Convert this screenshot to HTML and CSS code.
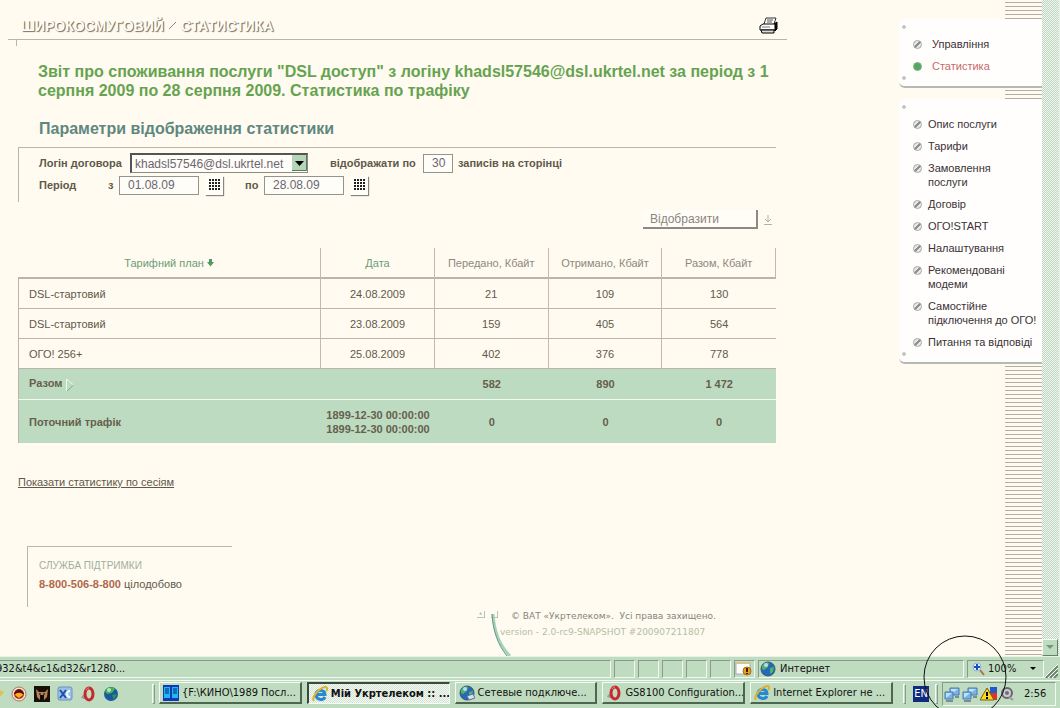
FILE: index.html
```html
<!DOCTYPE html>
<html lang="uk">
<head>
    <meta charset="UTF-8">
    <meta name="viewport" content="width=device-width, initial-scale=1.0">
    <title>Мій Укртелеком :: Статистика</title>
    <link rel="stylesheet" href="styles.css">
</head>
<body>
    <div class="browser">
        <main class="page">
            <header class="header">
                <div class="crumbs">
                    <span>ШИРОКОСМУГОВИЙ</span>
                    <svg width="9" height="9" viewBox="0 0 9 9"><path d="M1 8L8 1" stroke="#8d8779"/></svg>
                    <span>СТАТИСТИКА</span>
                </div>
                <button class="print" type="button" aria-label="Друк">
                    <svg width="20" height="18" viewBox="0 0 20 18">
                        <path d="M5 7L7 1H17L15 7" fill="#fff" stroke="#333"/>
                        <path d="M8 3H14M8 5H13" stroke="#555"/>
                        <path d="M15 7L18 5V12L16 14Z" fill="#111" stroke="#000"/>
                        <path d="M1 9L4 7H16V13H1Z" fill="#fff" stroke="#000"/>
                        <path d="M2 13H15V16H3Z" fill="#ddd" stroke="#000"/>
                        <path d="M3 10H11" stroke="#777"/>
                    </svg>
                </button>
            </header>

            <div class="content">
                <h1>Звіт про споживання послуги "DSL доступ" з логіну khadsl57546@dsl.ukrtel.net за період з 1 серпня 2009 по 28 серпня 2009. Статистика по трафіку</h1>
                <h2>Параметри відображення статистики</h2>

                <form class="params">
                    <div class="row">
                        <label class="first" for="login">Логін договора</label>
                        <span class="select">
                            <select id="login"><option>khadsl57546@dsl.ukrtel.net</option></select>
                            <svg class="arrow" width="15" height="16" viewBox="0 0 15 16"><rect width="15" height="16" fill="#b4d6b6"/><path d="M0 15.5H14.5V0" fill="none" stroke="#5a7a5e"/><path d="M3 6H12L7.500 11Z" fill="#000"/></svg>
                        </span>
                        <label class="count-label" for="count">відображати по</label>
                        <input class="count" id="count" type="text" value="30">
                        <span>записів на сторінці</span>
                    </div>
                    <div class="row">
                        <span class="period">Період</span>
                        <label class="from" for="from">з</label>
                        <input class="date" id="from" type="text" value="01.08.09">
                        <button class="cal" type="button" aria-label="Календар"><span></span></button>
                        <label class="to" for="to">по</label>
                        <input class="date" id="to" type="text" value="28.08.09">
                        <button class="cal" type="button" aria-label="Календар"><span></span></button>
                    </div>
                </form>
                <div class="actions">
                    <button class="show" type="button">Відобразити</button>
                    <svg width="8" height="10" viewBox="0 0 8 10"><path d="M4 0V6M1 4L4 7L7 4M0 9.500H8" fill="none" stroke="#b5b1a6"/></svg>
                </div>

                <table class="stats">
                    <thead>
                        <tr>
                            <th class="plan sorted">Тарифний план <svg width="7" height="8" viewBox="0 0 7 8"><path d="M2 0H5V3H7L3.500 7.500L0 3H2Z" fill="#4f9a5c"/></svg></th>
                            <th class="sorted">Дата</th>
                            <th>Передано, Кбайт</th>
                            <th>Отримано, Кбайт</th>
                            <th>Разом, Кбайт</th>
                        </tr>
                    </thead>
                    <tbody>
                        <tr><td>DSL-стартовий</td><td>24.08.2009</td><td>21</td><td>109</td><td>130</td></tr>
                        <tr><td>DSL-стартовий</td><td>23.08.2009</td><td>159</td><td>405</td><td>564</td></tr>
                        <tr><td>ОГО! 256+</td><td>25.08.2009</td><td>402</td><td>376</td><td>778</td></tr>
                    </tbody>
                    <tfoot>
                        <tr class="total">
                            <td>Разом <svg width="10" height="14" viewBox="0 0 10 14"><path d="M1.500 13V1L8.500 7" fill="none" stroke="#f4faef"/><path d="M8.500 7L2 13" stroke="#8aa78b"/></svg></td>
                            <td></td><td>582</td><td>890</td><td>1 472</td>
                        </tr>
                        <tr class="current">
                            <td>Поточний трафік</td><td>1899-12-30 00:00:00<br>1899-12-30 00:00:00</td><td>0</td><td>0</td><td>0</td>
                        </tr>
                    </tfoot>
                </table>

                <a class="sessions" href="#">Показати статистику по сесіям</a>

                <section class="support">
                    <h3>СЛУЖБА ПІДТРИМКИ</h3>
                    <p><b>8-800-506-8-800</b> цілодобово</p>
                </section>
            </div>

            <footer class="footer">
                <svg width="40" height="48" viewBox="0 0 40 48">
                    <path d="M8 9.500H1M8.500 3V10M21 9.500H15M21.500 3V10" stroke="#b9c2b6" fill="none"/>
                    <path d="M3 6L5 4L6 7Z" fill="#a9bbab"/>
                    <path d="M17 6C18 22 23 37 34 48" fill="none" stroke="#a9d0b8" stroke-width="3"/>
                    <path d="M16 6C17 23 22 37 31 48" fill="none" stroke="#609b8a"/>
                </svg>
                <div class="copy">
                    <p class="owner">© ВАТ «Укртелеком». &nbsp;Усі права захищено.</p>
                    <p class="version">version - 2.0-rc9-SNAPSHOT #200907211807</p>
                </div>
            </footer>
        </main>

        <aside class="side">
            <nav class="card wide">
                <ul>
                    <li><a href="#">Управління</a></li>
                    <li class="active"><a href="#">Статистика</a></li>
                </ul>
            </nav>
            <nav class="card">
                <ul>
                    <li><a href="#">Опис послуги</a></li>
                    <li><a href="#">Тарифи</a></li>
                    <li><a href="#">Замовлення<br>послуги</a></li>
                    <li><a href="#">Договір</a></li>
                    <li><a href="#">ОГО!START</a></li>
                    <li><a href="#">Налаштування</a></li>
                    <li><a href="#">Рекомендовані<br>модеми</a></li>
                    <li><a href="#">Самостійне<br>підключення до ОГО!</a></li>
                    <li><a href="#">Питання та відповіді</a></li>
                </ul>
            </nav>
        </aside>

        <div class="scrollbar">
            <button type="button" aria-label="Вниз"><svg width="8" height="5" viewBox="0 0 8 5"><path d="M0 0H8L4 4Z" fill="#6f9a80"/></svg></button>
        </div>
    </div>

    <div class="status">
        <div class="pane url"><span>932&amp;t4&amp;c1&amp;d32&amp;r1280...</span></div>
        <div class="pane small"></div>
        <div class="pane small"></div>
        <div class="pane small"></div>
        <div class="pane small"></div>
        <div class="pane small"></div>
        <div class="pane small"><svg width="18" height="16" viewBox="0 0 18 16"><rect x="1" y="2" width="14" height="11" fill="#fff" stroke="#aaa"/><path d="M1 2H15" stroke="#d6c68c" stroke-width="2"/><circle cx="12" cy="10" r="4" fill="#e5a01f" stroke="#a86a10"/><path d="M12 7V11M12 12V13" stroke="#402000" stroke-width="2"/></svg></div>
        <div class="pane zone"><svg width="16" height="16" viewBox="0 0 16 16"><use href="#globe"/></svg>Интернет</div>
        <div class="pane zoom">
            <svg width="14" height="14" viewBox="0 0 14 14"><path d="M8 8L12 13" stroke="#b5703a" stroke-width="2"/><circle cx="5" cy="5" r="4" fill="#e8f4ff" stroke="#8db0d8"/><path d="M5 2V8M2 5H8" stroke="#1d4fb8" stroke-width="2"/></svg>
            <span>100%</span>
            <svg class="drop" width="6" height="4" viewBox="0 0 6 4"><path d="M0 0H6L3 3Z" fill="#000"/></svg>
        </div>
        <svg class="resize" width="14" height="14" viewBox="0 0 14 14"><path d="M2 14L14 2M6 14L14 6M10 14L14 10" stroke="#6d8470" stroke-width="2"/><path d="M0 14L14 0M4 14L14 4M8 14L14 8" stroke="#fff"/></svg>
    </div>

    <div class="taskbar">
        <div class="quick">
            <svg width="4" height="16" viewBox="0 0 4 16"><path d="M0 4L4 6L0 11Z" fill="#e0c050"/></svg>
            <svg width="16" height="16" viewBox="0 0 16 16"><circle cx="8" cy="8" r="7" fill="#f4e4cf" stroke="#a87868"/><circle cx="8" cy="8" r="5" fill="#b02818"/><path d="M3 8C5 2 11 2 13 8Z" fill="#551018"/><path d="M4 9C5 6 11 6 12 9L8 12Z" fill="#ffb020"/></svg>
            <svg width="16" height="16" viewBox="0 0 16 16"><rect width="16" height="16" fill="#181008"/><path d="M2 3L5 6H11L14 3L13 11L10 14V9H6V14L3 11Z" fill="#b4835a"/><path d="M5 8H7M9 8H11M8 9V13" stroke="#000"/></svg>
            <svg width="16" height="16" viewBox="0 0 16 16"><rect x="1" y="1" width="14" height="13" rx="2" fill="#9cc0e8" stroke="#6a92c0"/><path d="M3 4L9 12M9 4L3 12" stroke="#1c50a8" stroke-width="2"/><path d="M13 5A3 3 0 1 0 13 11" fill="none" stroke="#f4f8ff" stroke-width="2"/></svg>
            <svg width="16" height="16" viewBox="0 0 16 16"><use href="#opera"/></svg>
            <svg width="16" height="16" viewBox="0 0 16 16"><circle cx="8" cy="8" r="7" fill="#185a9c"/><path d="M2 5C5 0 11 1 12 3L9 7L4 8Z" fill="#48b060"/><path d="M9 9L14 8L11 14Z" fill="#2e9060"/><circle cx="6" cy="4" r="2" fill="#b6e8b0"/></svg>
        </div>
        <i class="grip"></i>
        <div class="tasks">
            <button type="button"><svg width="16" height="16" viewBox="0 0 16 16"><rect width="16" height="16" fill="#1038b8"/><path d="M1 2H7V13H1ZM9 2H15V13H9Z" fill="#20b8f0"/><path d="M2 4H6M2 6H6M2 8H6M10 4H14M10 6H14M10 8H14" stroke="#082078"/></svg><span>{F:\КИНО\1989 Посл...</span></button>
            <button type="button" class="pressed"><svg width="16" height="16" viewBox="0 0 16 16"><use href="#ie"/></svg><span>Мій Укртелеком :: ...</span></button>
            <button type="button"><svg width="16" height="16" viewBox="0 0 16 16"><use href="#globe"/><path d="M8 11L14 9L16 13L10 15Z" fill="#d8e0f0" stroke="#5870a0"/></svg><span>Сетевые подключе...</span></button>
            <button type="button"><svg width="16" height="16" viewBox="0 0 16 16"><use href="#opera"/></svg><span>GS8100 Configuration...</span></button>
            <button type="button"><svg width="16" height="16" viewBox="0 0 16 16"><use href="#ie"/></svg><span>Internet Explorer не ...</span></button>
        </div>
        <i class="grip"></i>
        <span class="lang">EN</span>
        <i class="grip"></i>
        <div class="tray">
            <svg width="16" height="16" viewBox="0 0 16 16"><use href="#net"/></svg>
            <svg width="16" height="16" viewBox="0 0 16 16"><use href="#net"/></svg>
            <svg width="18" height="16" viewBox="0 0 18 16"><rect x="10" y="1" width="7" height="6" fill="#2858c8"/><rect x="10" y="7" width="7" height="7" fill="#d83828"/><path d="M7 2L14 14H0Z" fill="#ffd820" stroke="#806000"/><path d="M7 6V10M7 11V13" stroke="#000" stroke-width="2"/></svg>
            <svg width="14" height="16" viewBox="0 0 14 16"><circle cx="7" cy="7" r="5" fill="#c8ccd0" stroke="#68686c" stroke-width="2"/><circle cx="7" cy="7" r="2" fill="#707078"/><path d="M9 11L13 14" stroke="#9a9aa0" stroke-width="2"/></svg>
            <time>2:56</time>
        </div>
    </div>

    <svg class="ring" width="84" height="84" viewBox="0 0 84 84"><circle cx="42" cy="42" r="41" fill="none" stroke="#111"/></svg>

    <svg class="defs" width="0" height="0">
        <symbol id="globe" viewBox="0 0 16 16"><circle cx="8" cy="8" r="7" fill="#2868b8" stroke="#305878"/><path d="M2 5C4 1 8 1 9 2L8 6L4 9L2 8ZM10 7L14 6L13 11L10 13Z" fill="#50b468"/><circle cx="6" cy="4" r="2" fill="#b8dcec"/></symbol>
        <symbol id="opera" viewBox="0 0 16 16"><path d="M1 12C3 7 6 9 8 14Z" fill="#9a9aa0"/><ellipse cx="9" cy="8" rx="4" ry="6" fill="none" stroke="#c8282c" stroke-width="3"/><path d="M6 4C7 2 8 2 9 2" fill="none" stroke="#f09890"/></symbol>
        <symbol id="ie" viewBox="0 0 16 16"><path d="M13 11C11 15 4 14 4 8.500C4 3 13 3 13 8.500H5" fill="none" stroke="#2888d0" stroke-width="3"/><path d="M2 15C-1 11 8 1 14 1C16 2 15 4 14 5" fill="none" stroke="#e0b030" stroke-width="2"/></symbol>
        <symbol id="net" viewBox="0 0 16 16"><path d="M6 2H15V9H6Z" fill="#78b4e8" stroke="#4878a8"/><path d="M7 3H14L7 8Z" fill="#c0e0fa"/><path d="M1 6H9V13H1Z" fill="#78b4e8" stroke="#4878a8"/><path d="M2 7H8L2 12Z" fill="#c0e0fa"/><path d="M2 15H9M11 11H15" stroke="#7d8b98" stroke-width="2"/></symbol>
    </svg>
</body>
</html>
```
FILE: styles.css
```css
* {
    box-sizing: border-box;
}
body {
    margin: 0;
    height: 100vh;
    display: flex;
    flex-direction: column;
    overflow: hidden;
    position: relative;
    background: #fffbf0;
    color: #5f594a;
    font: 11px/14px "Liberation Sans", Arial, sans-serif;
}
h1, h2, h3, p, ul {
    margin: 0;
    padding: 0;
}
button, input, select {
    font: inherit;
    color: inherit;
    margin: 0;
    padding: 0;
    border-radius: 0;
}
svg {
    flex: none;
}
.browser {
    flex: 1;
    min-height: 0;
    display: flex;
}
.page {
    flex: 1;
    min-width: 0;
    display: flex;
    flex-direction: column;
}

/* header */
.header {
    display: flex;
    align-items: center;
    justify-content: space-between;
    height: 40px;
    margin-left: 8px;
    margin-right: 112px;
    padding: 12px 8px 0 13px;
    border-bottom: 1px solid #b9b5a9;
}
.crumbs {
    display: flex;
    align-items: center;
    gap: 4px;
    color: #fffdf6;
    font: bold 14px/20px "Liberation Sans", Arial, sans-serif;
    text-shadow: 1px 1px 1px #777267, 1px 0 0 #aaa496;
}
.print {
    border: 0;
    background: none;
    height: 18px;
}

/* report */
.content {
    margin-left: 16px;
    margin-right: 123px;
    padding-left: 2px;
    background: linear-gradient(#b9b5a9, #b9b5a9) 0 0 / 1px 6px no-repeat;
}
h1 {
    padding: 22px 0 0 20px;
    color: #66a350;
    font-size: 16px;
    line-height: 19px;
}
h2 {
    padding: 20px 0 9px 21px;
    color: #5f8780;
    font-size: 16px;
    line-height: 18px;
}
.params {
    height: 55px;
    padding: 4px 0 0 20px;
    border-top: 1px solid #b9b5a9;
    border-left: 1px solid #b9b5a9;
    font-weight: bold;
}
.row {
    display: flex;
    align-items: center;
    height: 22px;
}
.first {
    width: 91px;
}
.select {
    position: relative;
    width: 178px;
    height: 20px;
}
.select select {
    appearance: none;
    width: 100%;
    height: 100%;
    padding-left: 3px;
    border: 1px solid #8d8a84;
    border-top: 2px solid #555;
    border-left: 2px solid #555;
    background: #fffdf8;
    color: #6c6672;
    font-size: 12px;
    font-weight: normal;
}
.arrow {
    position: absolute;
    right: 1px;
    top: 2px;
    pointer-events: none;
}
.count-label {
    width: 93px;
    margin-left: 22px;
}
.count, .date {
    height: 19px;
    padding-left: 8px;
    border: 1px solid #95938d;
    background: #fffdf8;
    color: #6c6672;
    font-size: 12px;
    font-weight: normal;
}
.count {
    width: 30px;
    margin-right: 5px;
}
.date {
    width: 80px;
}
.period {
    width: 69px;
}
.from {
    width: 11px;
}
.to {
    width: 19px;
    margin-left: 22px;
}
.cal {
    width: 18px;
    height: 19px;
    margin-left: 6px;
    padding: 3px 4px;
    border: 0;
    background: #fffef8;
    box-shadow: 1px 1px 1px #8a867c;
}
.cal span {
    display: block;
    width: 11px;
    height: 12px;
    background: repeating-linear-gradient(90deg, transparent 0 2px, #fffef8 2px 3px), repeating-linear-gradient(#222 0 2px, #fffef8 2px 3px);
}
.actions {
    display: flex;
    align-items: center;
    justify-content: flex-end;
    gap: 6px;
    margin: 8px 4px 0 0;
}
.show {
    width: 115px;
    height: 19px;
    padding-left: 7px;
    border: 0;
    border-right: 2px solid #8d8a84;
    border-bottom: 2px solid #8d8a84;
    background: #fffdf6;
    color: #8a8580;
    font-size: 12px;
    text-align: left;
}

/* table */
.stats {
    width: 100%;
    margin-top: 19px;
    table-layout: fixed;
    border-collapse: separate;
    border-spacing: 0;
    text-align: center;
}
.stats th, .stats td {
    height: 30px;
    padding: 0;
    border-right: 1px solid #c1b9b2;
    border-bottom: 1px solid #bdb3ab;
}
.stats th {
    height: 31px;
    border-bottom-width: 2px;
    color: #8b897f;
    font-weight: normal;
}
.stats .sorted {
    color: #6d9b77;
}
.stats .plan {
    width: 40%;
}
.stats td:first-child {
    padding-left: 10px;
    border-left: 1px solid #bdb3ab;
    text-align: left;
}
.stats td:last-child {
    border-right: 0;
}
.stats tfoot td {
    border-right: 0;
    background: #bddbc1;
    font-weight: bold;
    color: #66604c;
}
.stats .total td {
    height: 31px;
    border-bottom: 1px solid #f4faef;
}
.stats .total svg {
    vertical-align: middle;
}
.stats .current td {
    height: 43px;
    border-bottom: 0;
}

.sessions {
    display: inline-block;
    margin-top: 32px;
    color: #5f594a;
}
.support {
    width: 205px;
    height: 61px;
    margin: 57px 0 0 9px;
    padding: 12px 0 0 11px;
    border: 1px solid #b9b5a9;
    border-right: 0;
    border-bottom: 0;
}
.support h3 {
    margin-bottom: 4px;
    color: #9fb09d;
    font-size: 10px;
    font-weight: normal;
}
.support b {
    color: #b0694c;
}
.footer {
    display: flex;
    margin-top: auto;
    padding-left: 476px;
    color: #85857c;
    font: 9px/16px "DejaVu Sans", sans-serif;
}
.copy {
    margin-left: -16px;
}
.owner {
    padding-left: 11px;
}
.version {
    color: #b5bea6;
}

/* side menu */
.side {
    width: 143px;
    padding-top: 19px;
    background: repeating-linear-gradient(transparent 0 2px, #b5aea6 2px 3px, transparent 3px 4px) right top / 37px 100% no-repeat;
}
.card {
    margin-bottom: 11px;
    padding: 18px 0 13px 14px;
    border-bottom: 2px solid #b5bab5;
    border-radius: 6px 0 0 6px;
    background: radial-gradient(circle at 5px 8px, #c5c9c5 0 2px, transparent 2px), radial-gradient(circle at 5px calc(100% - 8px), #c5c9c5 0 2px, transparent 2px), #fffefd;
}
.card ul {
    display: flex;
    flex-direction: column;
    gap: 8px;
    list-style: none;
}
.card li {
    display: flex;
    gap: 6px;
    white-space: nowrap;
}
.card.wide li {
    gap: 10px;
}
.card li::before {
    content: "";
    width: 7px;
    height: 7px;
    margin-top: 3px;
    border-radius: 50%;
    border: 1px solid #a3a8a3;
    background: linear-gradient(135deg, #e6e9e6 0 40%, #8c918c 40% 60%, #e6e9e6 60%);
}
.card .active::before {
    border-color: #82b68a;
    background: #55a565;
}
.card a {
    color: #3a3236;
    text-decoration: none;
}
.card .active a {
    color: #c86a68;
}

.scrollbar {
    width: 18px;
    display: flex;
    flex-direction: column;
    justify-content: flex-end;
    border-right: 1px solid #e9f3e9;
    background: repeating-conic-gradient(#bcd6c0 0 25%, #f3f6f1 0 50%) 0 0 / 2px 2px;
}
.scrollbar button {
    width: 16px;
    height: 17px;
    display: grid;
    place-items: center;
    border: 1px solid #f5fbf5;
    border-right-color: #64806a;
    border-bottom-color: #64806a;
    background: #c0dcc0;
}

/* status bar */
.status, .taskbar {
    display: flex;
    background: #c0dcc0;
    color: #111;
    font: 11px/14px "DejaVu Sans Condensed", "DejaVu Sans", sans-serif;
}
.status {
    height: 24px;
    padding: 3px 2px 2px 0;
    gap: 3px;
    align-items: stretch;
    border-top: 1px solid #e8f3e8;
}
.pane {
    display: flex;
    align-items: center;
    overflow: hidden;
    white-space: nowrap;
    border: 1px solid #869b88;
    border-right-color: #f2f9f2;
    border-bottom-color: #f2f9f2;
}
.url {
    flex: 1;
    border-left: 0;
}
.url span {
    margin-left: -4px;
}
.small {
    width: 21px;
}
.zone {
    width: 206px;
    gap: 4px;
    padding-left: 1px;
}
.zoom {
    width: 77px;
    gap: 2px;
    padding-left: 4px;
}
.drop {
    margin-left: 12px;
}
.resize {
    align-self: flex-end;
    margin-left: -3px;
}

/* taskbar */
.taskbar {
    height: 28px;
    padding: 1px 4px 0 0;
    align-items: flex-start;
    border-top: 1px solid #f5fbf5;
}
.quick {
    display: flex;
    gap: 7px;
    width: 152px;
    padding-top: 4px;
}
.grip {
    width: 3px;
    height: 20px;
    margin: 2px 4px 0 0;
    border: 1px solid #f5fbf5;
    border-right-color: #869b88;
    border-bottom-color: #869b88;
}
.tasks {
    flex: 1;
    display: flex;
    gap: 5px;
    margin-right: 10px;
}
.tasks button {
    flex: 1;
    min-width: 0;
    height: 22px;
    display: flex;
    align-items: center;
    gap: 3px;
    padding: 0 0 0 3px;
    overflow: hidden;
    white-space: nowrap;
    border: 1px solid #f5fbf5;
    border-right: 2px solid #4d6650;
    border-bottom: 2px solid #4d6650;
    background: #c0dcc0;
}
.tasks .pressed {
    border: 1px solid #f5fbf5;
    border-top: 2px solid #3c4a3e;
    border-left: 2px solid #3c4a3e;
    background: repeating-conic-gradient(#d3e4d3 0 25%, #f4f8f2 0 50%) 0 0 / 2px 2px;
    font-weight: bold;
}
.lang {
    margin: 4px 6px 0 3px;
    padding: 1px 0;
    width: 16px;
    text-align: center;
    background: #102a80;
    color: #fff;
}
.tray {
    display: flex;
    align-items: center;
    gap: 2px;
    width: 114px;
    height: 24px;
    padding-left: 1px;
    border: 1px solid #869b88;
    border-right-color: #f2f9f2;
    border-bottom-color: #f2f9f2;
}
.tray time {
    margin-left: 8px;
}

/* magnifier ring over the corner */
.ring {
    position: absolute;
    right: 53px;
    bottom: -11px;
    pointer-events: none;
}
.defs {
    position: absolute;
}
```
